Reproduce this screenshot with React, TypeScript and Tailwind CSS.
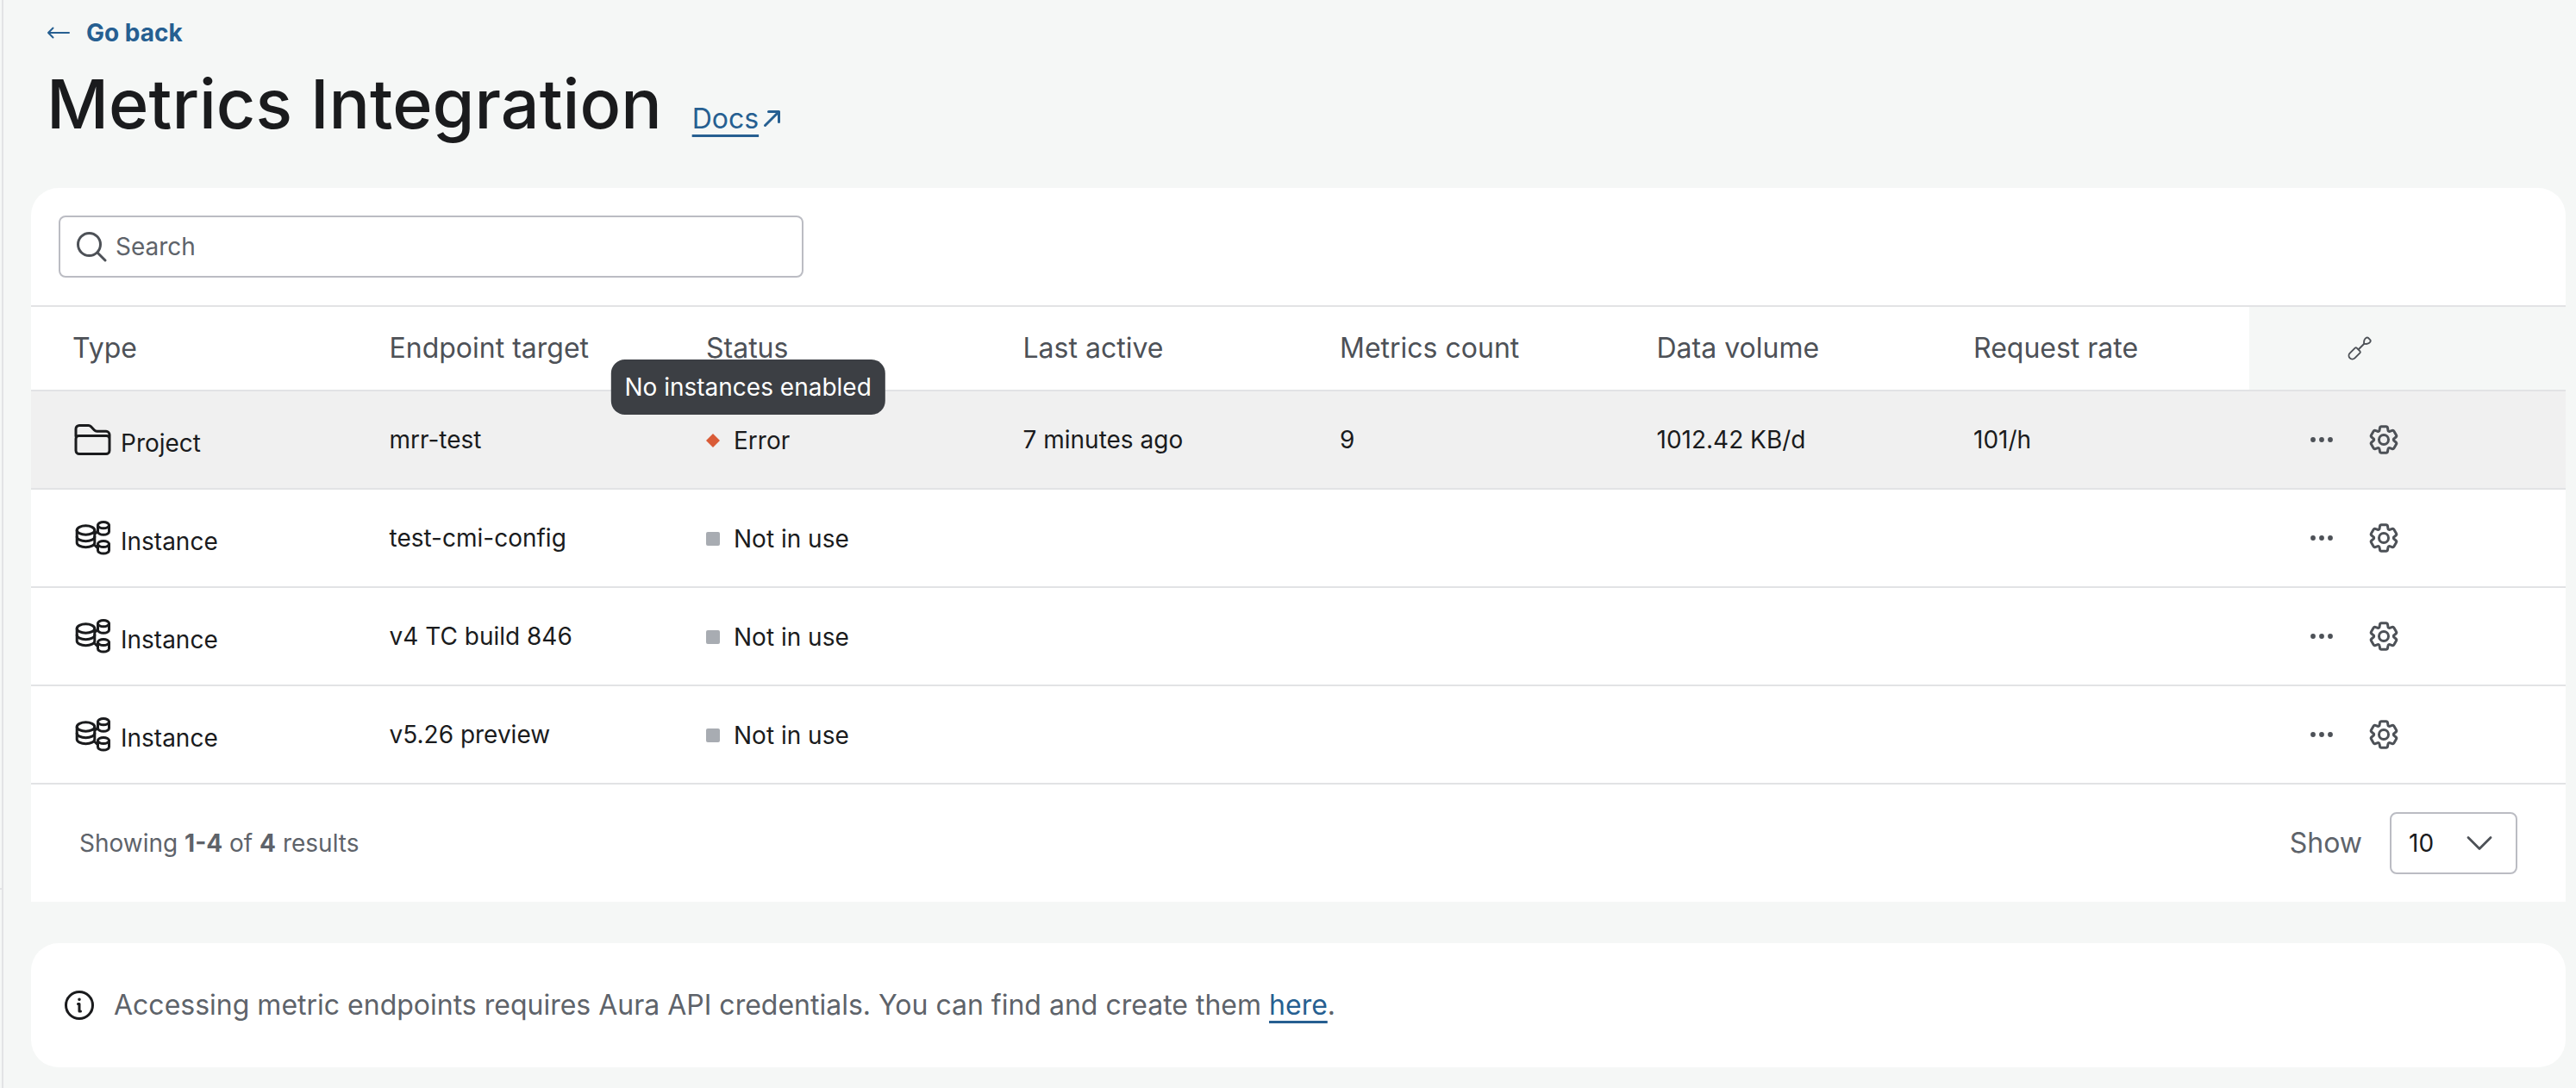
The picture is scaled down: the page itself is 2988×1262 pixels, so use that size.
import type { ReactNode } from "react";

const columns = [
  "Type",
  "Endpoint target",
  "Status",
  "Last active",
  "Metrics count",
  "Data volume",
  "Request rate",
];

type Row = {
  type: "Project" | "Instance";
  target: string;
  status: "Error" | "Not in use";
  lastActive?: string;
  count?: string;
  volume?: string;
  rate?: string;
};

const rows: Row[] = [
  {
    type: "Project",
    target: "mrr-test",
    status: "Error",
    lastActive: "7 minutes ago",
    count: "9",
    volume: "1012.42 KB/d",
    rate: "101/h",
  },
  { type: "Instance", target: "test-cmi-config", status: "Not in use" },
  { type: "Instance", target: "v4 TC build 846", status: "Not in use" },
  { type: "Instance", target: "v5.26 preview", status: "Not in use" },
];

function ArrowLeftIcon() {
  return (
    <svg className="h-8 w-7" viewBox="0 0 28 32" fill="none" stroke="currentColor" strokeWidth="2" strokeLinecap="round" strokeLinejoin="round" aria-hidden="true">
      <path d="M26 16H2M7.500 10.500 2 16l5.500 5.500" />
    </svg>
  );
}

function ArrowUpRightIcon() {
  return (
    <svg className="size-6" viewBox="0 0 24 24" fill="none" stroke="currentColor" strokeWidth="3" strokeLinecap="round" strokeLinejoin="round" aria-hidden="true">
      <path d="M3.500 19.500 19.500 3.500M7.500 3.500H19.500V15.500" />
    </svg>
  );
}

function SearchIcon() {
  return (
    <svg className="size-9" viewBox="0 0 36 36" fill="none" stroke="currentColor" strokeWidth="3" strokeLinecap="round" aria-hidden="true">
      <circle cx="15.500" cy="15.500" r="13" />
      <path d="m25 25 9 9" />
    </svg>
  );
}

function FolderIcon() {
  return (
    <svg className="h-10 w-12" viewBox="0 0 48 40" fill="none" stroke="currentColor" strokeWidth="3" strokeLinecap="round" strokeLinejoin="round" aria-hidden="true">
      <path d="M4 16V7.500a4 4 0 0 1 4-4h10.500a4 4 0 0 1 3 1.300l4 4.200a4 4 0 0 0 3 1.300H39a4 4 0 0 1 4 4V32.500a4 4 0 0 1-4 4H8a4 4 0 0 1-4-4V19a3.500 3.500 0 0 1 3.500-3.500h32A3.500 3.500 0 0 1 43 19" />
    </svg>
  );
}

function InstanceIcon() {
  return (
    <svg className="h-10 w-12" viewBox="0 0 48 40" fill="none" stroke="currentColor" strokeWidth="3" strokeLinecap="round" strokeLinejoin="round" aria-hidden="true">
      <ellipse cx="15.500" cy="11" rx="10.300" ry="5.200" />
      <path d="M5.200 11v14.500c0 2.900 4.600 5.200 10.300 5.200s10.300-2.300 10.300-5.200V11" />
      <path d="M5.200 18.500c0 2.900 4.600 5.200 10.300 5.200s10.300-2.300 10.300-5.200" />
      <ellipse cx="36" cy="5.200" rx="6.500" ry="3.600" />
      <path d="M29.500 5.200v7.500c0 2 2.900 3.600 6.500 3.600s6.500-1.600 6.500-3.600V5.200" />
      <ellipse cx="36" cy="27" rx="6.500" ry="3.600" />
      <path d="M29.500 27v7.500c0 2 2.900 3.600 6.500 3.600s6.500-1.600 6.500-3.600V27" />
      <path d="m26 15 3.500-2.500M26 28.500l3.500 3.500" />
    </svg>
  );
}

function ScrewdriverIcon() {
  return (
    <svg className="size-7" viewBox="0 0 28 28" fill="none" stroke="currentColor" strokeWidth="1.900" strokeLinejoin="round" aria-hidden="true">
      <path d="m2.700 19.600 6-6a1.500 1.500 0 0 1 2 0l3.700 3.700a1.500 1.500 0 0 1 0 2l-6 6a3.600 3.600 0 0 1-5.700-5.700Z" />
      <path d="m12.500 15.500 7-7" />
      <path d="M19.300 8.700c-.500-2.200 0-4.500 1-5.700 1.100-1.300 2.500-1.800 3.700-1.200l2.400 2.500c.600 1.200.100 2.600-1.200 3.500-1.500 1-3.700 1.500-5.900.900Z" />
    </svg>
  );
}

function MoreIcon() {
  return (
    <svg className="h-8 w-8" viewBox="0 0 32 32" fill="currentColor" aria-hidden="true">
      <circle cx="6" cy="16" r="2.900" />
      <circle cx="16" cy="16" r="2.900" />
      <circle cx="26" cy="16" r="2.900" />
    </svg>
  );
}

function GearIcon() {
  return (
    <svg className="size-9" viewBox="0 0 36 36" fill="none" stroke="currentColor" strokeWidth="3" strokeLinejoin="round" aria-hidden="true">
      <path d="M15.300 2.700h5.400a1.800 1.800 0 0 1 1.800 1.500l.5 3a1.500 1.500 0 0 0 2 1.200l2.700-1a1.800 1.800 0 0 1 2.200.800l2.600 4.500a1.800 1.800 0 0 1-.4 2.300l-2.200 1.800a1.500 1.500 0 0 0 0 2.400l2.200 1.800a1.800 1.800 0 0 1 .4 2.300l-2.600 4.500a1.800 1.800 0 0 1-2.200.800l-2.700-1a1.500 1.500 0 0 0-2 1.200l-.5 3a1.800 1.800 0 0 1-1.800 1.500h-5.400a1.800 1.800 0 0 1-1.800-1.500l-.5-3a1.500 1.500 0 0 0-2-1.200l-2.700 1a1.800 1.800 0 0 1-2.200-.800l-2.600-4.500a1.800 1.800 0 0 1 .4-2.300l2.200-1.800a1.500 1.500 0 0 0 0-2.400l-2.200-1.800a1.800 1.800 0 0 1-.4-2.300l2.600-4.500a1.800 1.800 0 0 1 2.200-.800l2.700 1a1.500 1.500 0 0 0 2-1.200l.5-3a1.800 1.800 0 0 1 1.800-1.500Z" />
      <circle cx="18" cy="18" r="5.500" />
    </svg>
  );
}

function ChevronDownIcon() {
  return (
    <svg className="pointer-events-none absolute top-1/2 right-7 h-5 w-8 -translate-y-1/2" viewBox="0 0 32 20" fill="none" stroke="currentColor" strokeWidth="2.800" strokeLinecap="round" strokeLinejoin="round" aria-hidden="true">
      <path d="m3 3.500 13 13 13-13" />
    </svg>
  );
}

function InfoIcon() {
  return (
    <svg className="size-9 text-[#1a1b1d]" viewBox="0 0 36 36" fill="none" stroke="currentColor" strokeWidth="3" strokeLinecap="round" strokeLinejoin="round" aria-hidden="true">
      <circle cx="18" cy="18" r="15.500" />
      <path d="M16.500 16.500H18V25h1.500" />
      <circle cx="18" cy="11.200" r="1" fill="currentColor" strokeWidth="1.600" />
    </svg>
  );
}

function StatusMark({ status }: { status: Row["status"] }) {
  if (status === "Error") {
    return (
      <svg className="size-4 text-[#d95b37]" viewBox="0 0 16 16" fill="currentColor" aria-hidden="true">
        <path d="M8 0 16 8 8 16 0 8Z" />
      </svg>
    );
  }
  return <span className="size-4 rounded-xs bg-[#a8acb2]" />;
}

function Cell({ children }: { children?: ReactNode }) {
  return <td className="px-12">{children}</td>;
}

export default function App() {
  return (
    <div className="flex min-h-screen bg-[#f5f7f6] font-['Inter','Liberation_Sans',sans-serif] text-[28px] leading-10 text-[#1a1b1d]">
      <div className="flex w-1 shrink-0 flex-col border-r-2 border-[#e2e3e5]">
        <div className="flex-1 border-b-2 border-[#e2e3e5]" />
        <div className="h-[230px]" />
      </div>
      <main className="min-w-0 flex-1 pt-[18px] pr-3 pb-6 pl-8">
        <header className="pl-[18px]">
          <a href="#back" className="flex w-fit items-center gap-[18px] font-bold text-[#265f91]">
            <ArrowLeftIcon />
            Go back
          </a>
          <div className="flex items-baseline gap-[35px] pt-[14px]">
            <h1 className="text-[79px] leading-[96px] font-medium">Metrics Integration</h1>
            <a href="#docs" className="flex items-center gap-1 text-[32px] text-[#265f91]">
              <span className="underline decoration-[3px] underline-offset-[7px]">Docs</span>
              <ArrowUpRightIcon />
            </a>
          </div>
        </header>

        <section className="mt-[50px] rounded-t-[32px] bg-white">
          <div className="p-8">
            <label className="flex h-[72px] max-w-[864px] items-center gap-[10px] rounded-lg border-2 border-[#bbbcc3] px-[18px] text-[#4d5157]">
              <SearchIcon />
              <input
                type="search"
                aria-label="Search"
                placeholder="Search"
                className="min-w-0 flex-1 bg-transparent outline-none placeholder:text-[#5e636a]"
              />
            </label>
          </div>

          <table className="w-full table-fixed border-y-2 border-[#e2e3e5] text-left">
            <thead>
              <tr className="h-[98px] text-[32px] text-[#4d5157]">
                {columns.map((name) => (
                  <th key={name} scope="col" className="px-12 font-normal whitespace-nowrap">
                    {name}
                  </th>
                ))}
                <th scope="col" aria-label="Actions" className="bg-[#f5f7f6]">
                  <div className="flex w-64 justify-center">
                    <ScrewdriverIcon />
                  </div>
                </th>
              </tr>
            </thead>
            <tbody>
              {rows.map((row) => (
                <tr
                  key={row.target}
                  className="h-[114px] border-t-2 border-[#e2e3e5] whitespace-nowrap first:bg-[#f0f0f0]"
                >
                  <Cell>
                    <div className="flex items-center gap-2">
                      {row.type === "Project" ? <FolderIcon /> : <InstanceIcon />}
                      <span className="pt-2">{row.type}</span>
                    </div>
                  </Cell>
                  <Cell>{row.target}</Cell>
                  <Cell>
                    <span className="relative inline-flex items-center gap-4 align-middle">
                      <StatusMark status={row.status} />
                      {row.status}
                      {row.status === "Error" && (
                        <span
                          role="tooltip"
                          className="absolute bottom-full left-1/2 mb-[10px] -translate-x-1/2 rounded-2xl bg-[#3c3f44] px-4 py-3 text-white"
                        >
                          No instances enabled
                        </span>
                      )}
                    </span>
                  </Cell>
                  <Cell>{row.lastActive}</Cell>
                  <Cell>{row.count}</Cell>
                  <Cell>{row.volume}</Cell>
                  <Cell>{row.rate}</Cell>
                  <td className="pl-14 text-[#4d5157]">
                    <div className="flex items-center gap-4">
                      <button type="button" aria-label="More actions" className="flex size-14 items-center justify-center">
                        <MoreIcon />
                      </button>
                      <button type="button" aria-label="Settings" className="flex size-14 items-center justify-center">
                        <GearIcon />
                      </button>
                    </div>
                  </td>
                </tr>
              ))}
            </tbody>
          </table>

          <div className="flex items-center justify-between px-14 py-8 text-[#5e636a]">
            <p>
              Showing <b>1-4</b> of <b>4</b> results
            </p>
            <label className="flex items-center gap-8 text-[32px]">
              Show
              <span className="relative text-[#4d5157]">
                <select
                  defaultValue="10"
                  className="block h-[72px] w-[148px] appearance-none rounded-lg border-2 border-[#bbbcc3] bg-white pl-5 text-[28px] text-[#1a1b1d]"
                >
                  <option>10</option>
                  <option>20</option>
                  <option>50</option>
                </select>
                <ChevronDownIcon />
              </span>
            </label>
          </div>
        </section>

        <section className="mt-12 flex items-center gap-[22px] rounded-[32px] bg-white px-[38px] py-[52px] text-[32px] text-[#5e636a]">
          <InfoIcon />
          <p>
            Accessing metric endpoints requires Aura API credentials. You can find and create them{" "}
            <a href="#credentials" className="text-[#265f91] underline decoration-[3px] underline-offset-[7px]">
              here
            </a>
            .
          </p>
        </section>
      </main>
    </div>
  );
}
